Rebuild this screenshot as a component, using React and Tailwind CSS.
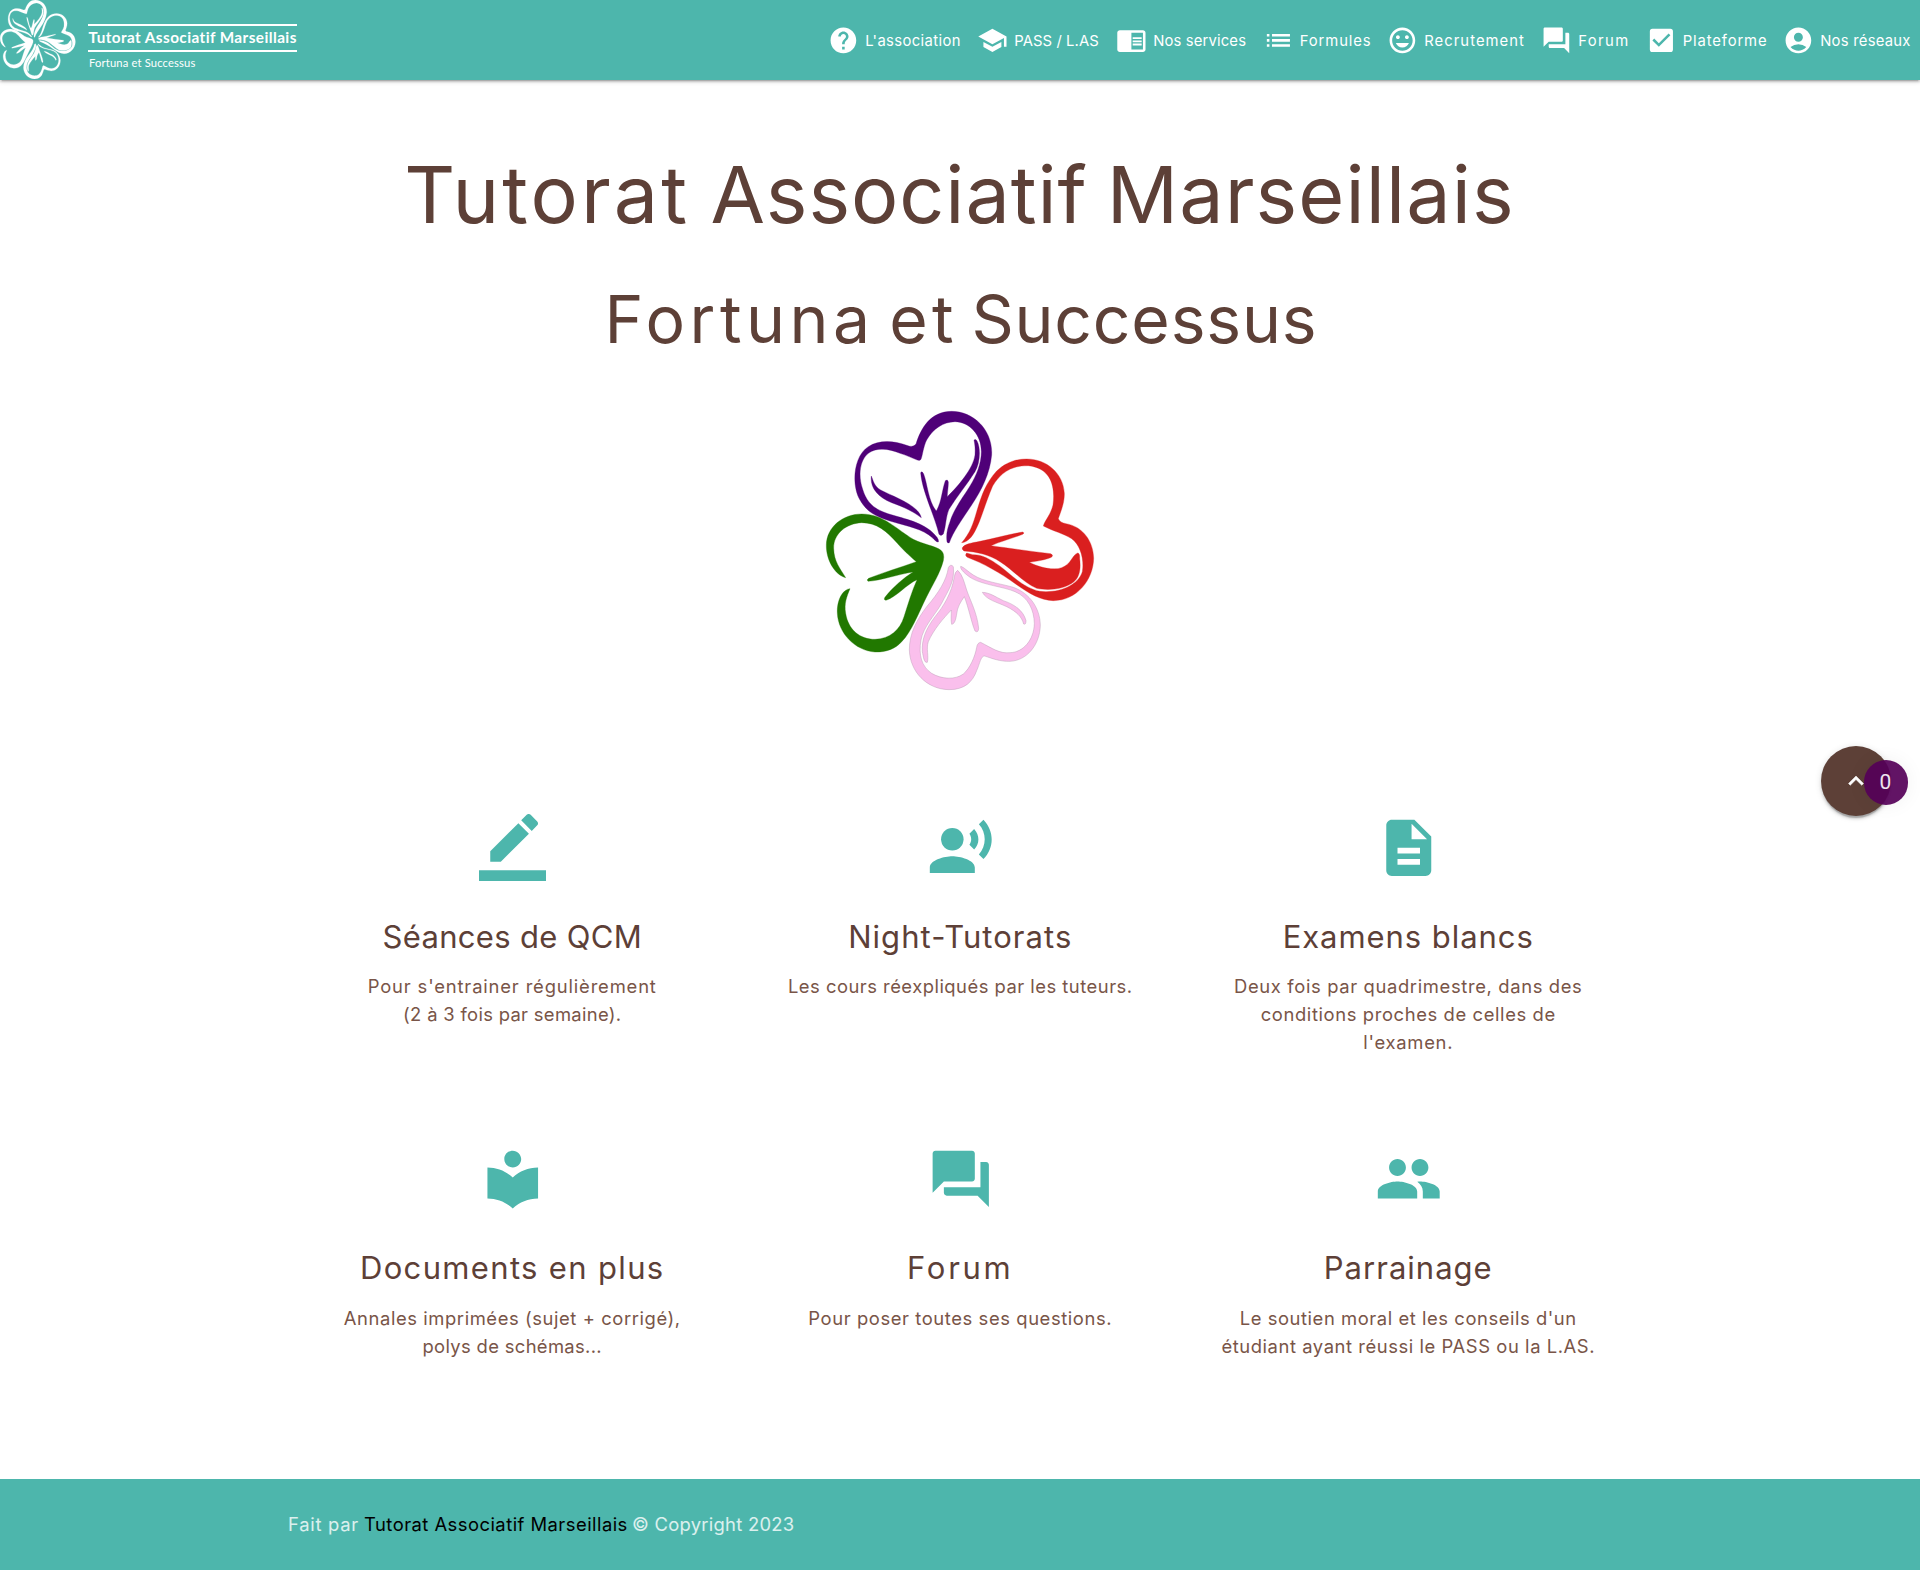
import {
  MdHelp,
  MdSchool,
  MdChromeReaderMode,
  MdList,
  MdMood,
  MdForum,
  MdCheckBox,
  MdAccountCircle,
  MdRecordVoiceOver,
  MdDescription,
  MdLocalLibrary,
  MdPeople,
} from "react-icons/md";

const PURPLE = [
  "M411 425 C408 405 412 385 420 365 C430 330 460 290 480 258 C500 225 514 190 514 155 C514 105 480 66 435 65 C400 66 370 85 350 120 C340 140 338 165 333 178 Q330 183 322 180 C305 174 290 166 270 160 C240 147 200 140 175 160 C150 180 143 225 158 268 C172 315 200 332 250 346 C290 358 350 370 381 412 Q387 420 385 426 C380 427 374 420 368 414 C340 387 290 378 250 366 C215 355 175 345 150 300 C125 260 128 170 175 140 C205 120 250 121 290 136 Q308 144 318 132 C333 85 360 35 425 34 C490 34 549 90 545 165 C540 220 515 270 485 315 C455 360 430 395 418 428 Q413 431 411 425Z",
  "M492 120 Q497 116 501 123 C513 145 510 190 495 215 C470 255 440 290 417 328 C407 350 408 380 400 402 Q393 410 387 403 C375 350 335 270 332 218 Q336 211 341 222 C352 250 355 305 379 333 C395 305 396 270 406 242 Q413 236 415 246 C415 265 412 275 412 290 C445 258 490 205 495 165 C496 145 495 135 492 120Z",
  "M184 228 C190 242 192 258 212 270 C250 290 325 315 334 353 C310 335 280 320 245 308 C200 290 180 260 184 228Z",
];

const RED = [
  "M455 428 C480 400 490 370 500 335 C515 285 527 250 560 213 C590 185 620 177 650 177 C710 177 760 220 763 280 C764 310 750 340 745 356 Q750 368 768 371 C820 380 850 425 851 475 C850 540 800 602 730 602 C690 600 660 582 620 554 C570 518 520 490 472 472 Q463 466 470 459 L488 464 C515 463 540 477 568 497 C600 520 640 565 690 574 C750 580 805 555 817 515 C823 480 812 435 785 416 C760 400 730 394 700 378 C705 360 722 345 729 315 C735 270 730 205 655 197 C600 196 570 222 548 258 C530 300 520 335 508 365 C495 395 485 418 462 427Z",
  "M457 443 C465 432 480 430 510 424 C550 416 600 402 638 396 Q645 398 638 403 C610 414 570 425 543 437 C600 445 670 455 722 461 Q732 465 724 472 C705 480 685 483 658 487 C690 503 730 512 755 503 C785 492 785 466 803 459 Q810 460 809 475 C812 500 812 530 790 547 C760 570 710 572 680 565 C640 548 610 510 570 485 C540 465 500 455 462 453 Q455 448 457 443Z",
];

const GREEN = [
  "M107 533 C75 525 48 480 49 435 C50 380 100 342 155 342 C220 342 260 388 310 418 C340 433 375 438 392 450 Q405 460 400 482 C390 520 370 550 350 590 C325 640 305 695 275 725 C255 748 225 757 195 756 C135 752 85 700 82 640 C80 600 98 568 120 566 C110 590 102 610 107 640 C115 690 150 718 195 718 C240 716 270 690 282 650 C295 610 305 575 321 539 C290 553 260 590 228 601 Q219 599 226 590 C250 560 280 535 309 516 C265 523 210 542 174 544 Q169 540 176 535 C220 517 270 503 319 485 C295 465 280 450 262 430 C230 393 200 368 155 368 C110 370 70 400 71 445 C72 485 90 505 107 533Z",
];

const PINK = [
  "M430 500 Q422 490 415 503 C410 540 385 580 350 620 C320 660 298 700 298 750 C300 815 350 868 417 869 C465 869 488 845 500 812 C510 790 512 768 524 768 C545 775 570 785 600 784 C650 782 690 735 691 675 C690 625 660 580 610 562 C570 550 520 545 490 525 C470 512 464 503 452 499 C450 508 465 522 485 535 C520 555 580 560 615 575 C655 592 672 630 673 670 C672 720 640 757 600 758 C570 762 545 744 512 727 Q502 728 500 742 C495 770 480 805 460 822 C435 840 395 838 365 820 C335 800 325 765 333 720 C340 680 375 645 395 610 C415 570 435 545 430 500Z",
  "M443 511 Q435 515 433 530 C425 580 400 620 375 650 C345 690 335 720 337 755 C340 770 342 790 352 787 C357 770 348 745 355 725 C370 690 400 655 424 630 C424 645 422 660 425 673 C435 672 438 655 440 642 C442 622 452 605 463 590 C475 620 485 670 495 693 Q505 700 506 685 C502 640 480 600 470 570 C462 545 458 525 443 511Z",
  "M517 577 C530 600 560 606 590 620 C620 635 635 650 641 672 Q648 675 648 662 C640 630 610 612 580 602 C555 590 540 578 517 577Z",
];

function Clover({ className, viewBox, mono }) {
  const groups = [
    [PURPLE, "#4f0078"],
    [RED, "#da1f1f"],
    [GREEN, "#217800"],
    [PINK, "#fabfec"],
  ];
  return (
    <svg className={className} viewBox={viewBox} preserveAspectRatio="none" aria-hidden="true">
      {groups.map(([paths, color]) =>
        paths.map((d) => (
          <path
            key={d}
            d={d}
            fill={mono ? "#fff" : color}
            stroke={mono ? "#fff" : color === "#fabfec" ? "#b79ab2" : color}
            strokeWidth={mono ? 2 : color === "#fabfec" ? 1.3 : 1}
          />
        ))
      )}
    </svg>
  );
}

function BorderColor({ className }) {
  return (
    <svg className={className} viewBox="0 0 24 24" fill="currentColor" aria-hidden="true">
      <path d="M17.75 7L14 3.25l-10 10V17h3.75l10-10zm2.96-2.96c.39-.39.39-1.02 0-1.41L18.37.29c-.39-.39-1.02-.39-1.41 0L15 2.25 18.75 6l1.96-1.96z" />
      <path d="M0 20h24v4H0z" />
    </svg>
  );
}

function ArrowUp({ className }) {
  return (
    <svg className={className} viewBox="0 0 24 24" fill="currentColor" stroke="currentColor" strokeWidth="0.4" aria-hidden="true">
      <path d="M7.41 15.41L12 10.83l4.59 4.58L18 14l-6-6-6 6z" />
    </svg>
  );
}

const NAV = [
  { Icon: MdHelp, label: "L'association", width: "w-[149px]", tracking: "tracking-[0.38px]" },
  { Icon: MdSchool, label: "PASS / L.AS", width: "w-[139px]", tracking: "tracking-[0.1px]" },
  { Icon: MdChromeReaderMode, label: "Nos services", width: "w-[146.5px]", tracking: "tracking-[0.16px]" },
  { Icon: MdList, label: "Formules", width: "w-[124.5px]", tracking: "tracking-[0.92px]" },
  { Icon: MdMood, label: "Recrutement", width: "w-[154px]", tracking: "tracking-[1.05px]" },
  { Icon: MdForum, label: "Forum", width: "w-[104.5px]", tracking: "tracking-[1.4px]" },
  { Icon: MdCheckBox, label: "Plateforme", width: "w-[137.5px]", tracking: "tracking-[0.88px]" },
  { Icon: MdAccountCircle, label: "Nos réseaux", width: "w-[136.8px]", tracking: "tracking-[0.26px]" },
];

const FEATURES = [
  {
    Icon: BorderColor,
    title: "Séances de QCM",
    tracking: "tracking-[0.32px]",
    lines: [
      ["Pour s'entrainer régulièrement", "tracking-[0.84px]"],
      ["(2 à 3 fois par semaine).", "tracking-[0.32px]"],
    ],
  },
  {
    Icon: MdRecordVoiceOver,
    title: "Night-Tutorats",
    tracking: "tracking-[1.05px]",
    lines: [["Les cours réexpliqués par les tuteurs.", "tracking-[0.49px]"]],
  },
  {
    Icon: MdDescription,
    title: "Examens blancs",
    tracking: "tracking-[0.95px]",
    lines: [
      ["Deux fois par quadrimestre, dans des", "tracking-[0.64px]"],
      ["conditions proches de celles de", "tracking-[0.61px]"],
      ["l'examen.", "tracking-[0.73px]"],
    ],
  },
  {
    Icon: MdLocalLibrary,
    title: "Documents en plus",
    tracking: "tracking-[1.34px]",
    lines: [
      ["Annales imprimées (sujet + corrigé),", "tracking-[0.58px]"],
      ["polys de schémas...", "tracking-[0.34px]"],
    ],
  },
  {
    Icon: MdForum,
    title: "Forum",
    tracking: "tracking-[2.7px]",
    lines: [["Pour poser toutes ses questions.", "tracking-[0.59px]"]],
  },
  {
    Icon: MdPeople,
    title: "Parrainage",
    tracking: "tracking-[1.01px]",
    lines: [
      ["Le soutien moral et les conseils d'un", "tracking-[0.56px]"],
      ["étudiant ayant réussi le PASS ou la L.AS.", "tracking-[0.57px]"],
    ],
  },
];

function Header() {
  return (
    <header className="flex h-20 justify-between bg-[#4db6ac] text-white shadow-[0_2px_2px_0_rgba(0,0,0,0.14),0_3px_1px_-2px_rgba(0,0,0,0.12),0_1px_5px_0_rgba(0,0,0,0.2)]">
      <a className="flex">
        <Clover className="h-[79px] w-[75.5px]" viewBox="48 34 804 836" mono />
        <div className="ml-3 pt-6 font-['Lato',sans-serif]">
          <div className="h-[28px] w-[209.5px] border-y-2 border-white pl-px text-[15.3px] leading-[22px] font-bold tracking-[0.42px] whitespace-nowrap">
            Tutorat Associatif Marseillais
          </div>
          <div className="mt-0.5 pl-[1.5px] text-[11.2px] leading-[17px] tracking-[0.16px]">Fortuna et Successus</div>
        </div>
      </a>
      <nav className="flex items-center">
        {NAV.map(({ Icon, label, width, tracking }) => (
          <a key={label} className={`flex shrink-0 items-center ${width}`}>
            <Icon className="size-[30.8px] shrink-0" />
            <span className={`mt-0.5 ml-[6.2px] text-[14.8px] leading-6 whitespace-nowrap ${tracking}`}>{label}</span>
          </a>
        ))}
      </nav>
    </header>
  );
}

export default function App() {
  return (
    <div className="relative h-[1570px] w-[1920px] overflow-hidden bg-white font-['Inter',sans-serif]">
      <Header />

      <main className="text-center">
        <h1 className="-ml-px pt-16 text-[79px] leading-[100px] text-[#5d4037]">
          <span className="tracking-[3.1px]">Tutorat</span> <span className="-ml-0.5 tracking-[0.9px]">Associatif</span>{" "}
          <span className="-ml-[3px] tracking-[1.1px]">Marseillais</span>
        </h1>
        <h2 className="mt-[30px] pl-0.5 text-[66px] leading-[90px] text-[#5d4037]">
          <span className="tracking-[4.5px]">Fortuna</span> <span className="-ml-1 tracking-[4.5px]">et</span>{" "}
          <span className="-ml-[5.4px] tracking-[0.8px]">Successus</span>
        </h2>
        <Clover className="mx-auto mt-9 size-[300px]" viewBox="0 0 900 900" />

        <section className="mx-auto mt-[113.5px] grid w-[1344px] grid-cols-3">
          {FEATURES.map(({ Icon, title, tracking, lines }) => (
            <div key={title} className="h-[331.5px] pl-[0.5px]">
              <Icon className="mx-auto size-[67.5px] text-[#4db6ac]" />
              <h5 className={`mt-[37.9px] text-[31px] leading-9 text-[#5d4037] ${tracking}`}>{title}</h5>
              <div className="mt-[17.4px] text-[18.4px] leading-7 whitespace-nowrap text-[#795548]">
                {lines.map(([text, lineTracking]) => (
                  <p key={text} className={lineTracking}>
                    {text}
                  </p>
                ))}
              </div>
            </div>
          ))}
        </section>
      </main>

      <footer className="mt-[2.5px] h-[91px] bg-[#4db6ac] pt-[30.5px]">
        <div className="mx-auto flex w-[1344px] text-[18.4px] leading-7 whitespace-nowrap text-white/80">
          <span className="w-19 tracking-[0.74px]">Fait par</span>
          <a className="w-[268px] tracking-[0.47px] text-black">Tutorat Associatif Marseillais</a>
          <span className="tracking-[0.27px]">© Copyright 2023</span>
        </div>
      </footer>

      <button className="absolute top-[746px] left-[1821px] flex size-[70px] items-center justify-center rounded-full bg-[#5d4037] text-white shadow-[0_3px_3px_0_rgba(0,0,0,0.14),0_1px_7px_0_rgba(0,0,0,0.12),0_3px_1px_-1px_rgba(0,0,0,0.2)]">
        <ArrowUp className="size-[30px]" />
      </button>
      <div className="absolute top-[760px] left-[1864px] flex h-[45px] w-11 items-center justify-center rounded-full bg-[rgba(85,0,88,0.92)] pr-px font-['Roboto',sans-serif] text-[21px] text-white/90 shadow-[0_0_20px_rgba(0,0,0,0.06)]">
        0
      </div>
    </div>
  );
}
